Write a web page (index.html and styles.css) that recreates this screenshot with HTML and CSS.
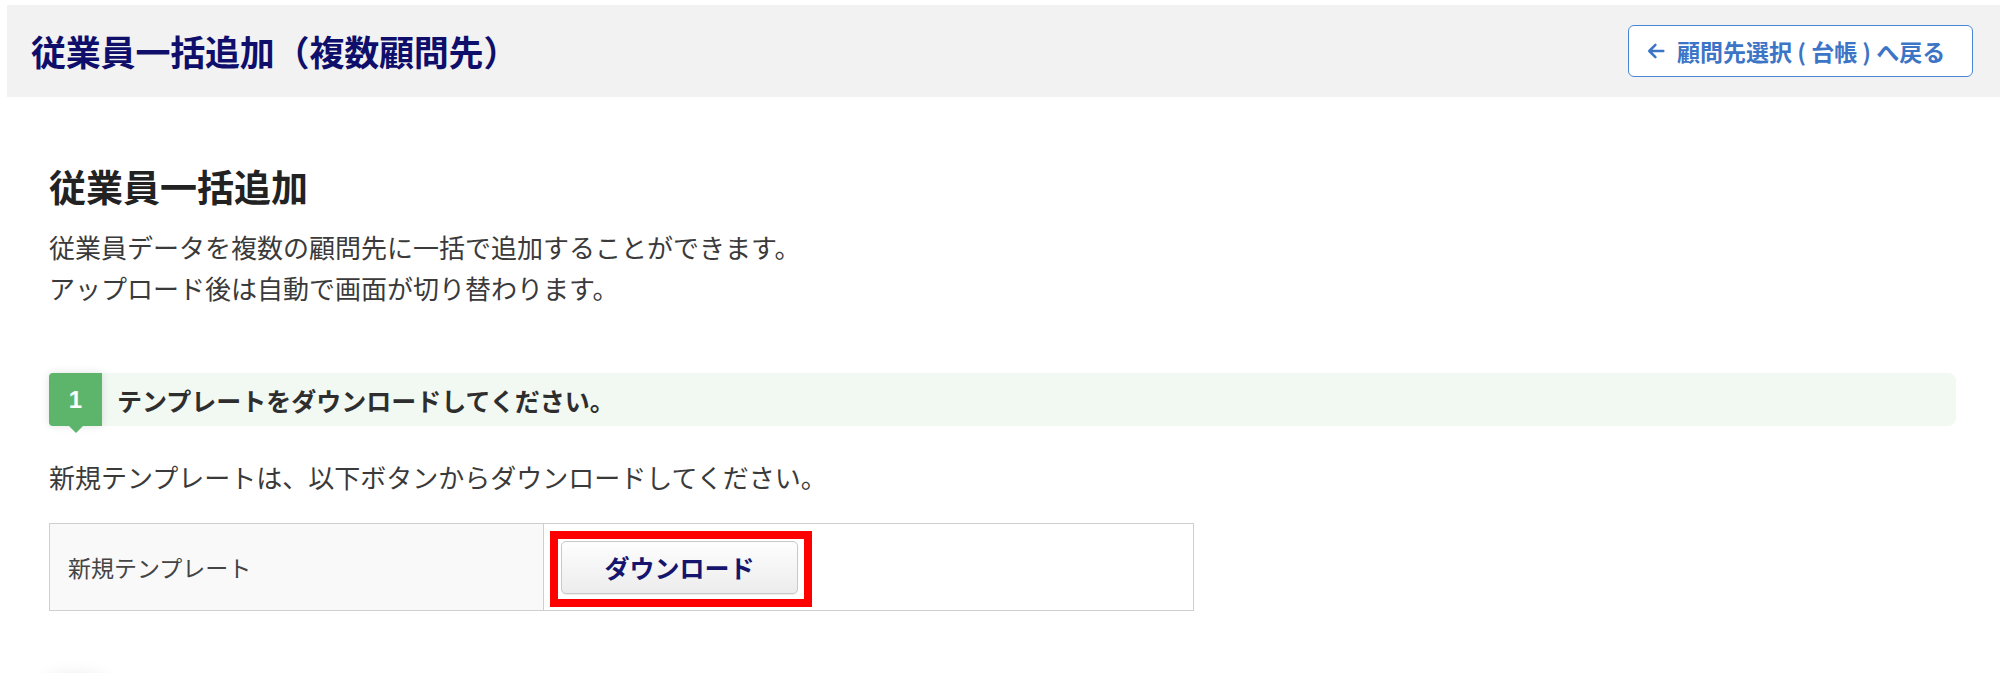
FILE: index.html
```html
<!DOCTYPE html>
<html lang="ja">
<head>
<meta charset="utf-8">
<title>従業員一括追加（複数顧問先）</title>
<link rel="stylesheet" href="styles.css">
</head>
<body>
<header class="page-header">
  <h1 class="page-title">従業員一括追加（複数顧問先）</h1>
  <a class="back-btn" href="#">
    <svg class="back-icon" viewBox="0 0 16 16" width="18" height="18" aria-hidden="true">
      <path d="M14.5 8H2M7.5 2.5L2 8L7.5 13.5" fill="none" stroke="currentColor" stroke-width="2.2" stroke-linecap="round" stroke-linejoin="round"/>
    </svg>
    <span>顧問先選択 ( 台帳 ) へ戻る</span>
  </a>
</header>

<main class="content">
  <h2 class="section-title">従業員一括追加</h2>
  <p class="lead">従業員データを複数の顧問先に一括で追加することができます。<br>アップロード後は自動で画面が切り替わります。</p>

  <div class="step">
    <div class="step-num">1</div>
    <div class="step-label">テンプレートをダウンロードしてください。</div>
  </div>
  <p class="step-text">新規テンプレートは、以下ボタンからダウンロードしてください。</p>

  <table class="dl-table">
    <tr>
      <th class="dl-head">新規テンプレート</th>
      <td class="dl-cell">
        <div class="highlight">
          <button class="dl-btn" type="button">ダウンロード</button>
        </div>
      </td>
    </tr>
  </table>

  <div class="step-next">
    <div class="step-num step-num-next"></div>
  </div>
</main>
</body>
</html>
```

FILE: styles.css
```css
* { box-sizing: border-box; }

html, body {
  margin: 0;
  padding: 0;
  background: #ffffff;
  font-family: "Noto Sans CJK JP", "Noto Sans", sans-serif;
  color: #333333;
  overflow: hidden;
}

.page-header {
  margin: 5px 0 0 7px;
  height: 92px;
  background: #f2f2f2;
  display: flex;
  align-items: center;
  justify-content: space-between;
  padding: 0 27px 0 24px;
}

.page-title {
  margin: 0;
  font-size: 35px;
  line-height: 44px;
  font-weight: 700;
  color: #0f0f6b;
  letter-spacing: -0.2px;
}

.back-btn {
  display: flex;
  align-items: center;
  gap: 12px;
  height: 52px;
  width: 345px;
  padding: 0 0 0 18px;
  background: #ffffff;
  border: 1px solid #4a86d6;
  border-radius: 6px;
  color: #3c74c6;
  font-size: 23px;
  font-weight: 700;
  text-decoration: none;
  white-space: pre;
}

.back-icon {
  flex: none;
  width: 18px;
  height: 18px;
}

.content {
  padding: 64px 44px 0 49px;
}

.section-title {
  margin: 0;
  font-size: 37px;
  line-height: 50px;
  font-weight: 700;
  color: #222222;
}

.lead {
  margin: 15px 0 0;
  font-size: 26px;
  line-height: 41px;
  color: #3a3a3a;
}

.step {
  margin-top: 65px;
  display: flex;
  align-items: center;
  height: 53px;
  background: #f2f8f2;
  border-radius: 4px 8px 8px 4px;
}

.step-num {
  position: relative;
  flex: none;
  width: 53px;
  height: 53px;
  display: flex;
  align-items: center;
  justify-content: center;
  background: #5cb56b;
  border-radius: 4px 0 0 4px;
  color: #ffffff;
  font-family: "Liberation Sans", "Noto Sans", sans-serif;
  font-size: 24px;
  font-weight: 700;
  box-shadow: 0 0 8px rgba(0, 0, 0, 0.12);
}

.step-num::after {
  content: "";
  position: absolute;
  left: 50%;
  bottom: -7px;
  margin-left: -7px;
  border-left: 7px solid transparent;
  border-right: 7px solid transparent;
  border-top: 7px solid #5cb56b;
}

.step-label {
  padding-left: 15px;
  font-size: 25px;
  font-weight: 700;
  color: #2e2e2e;
}

.step-text {
  margin: 30px 0 0;
  font-size: 26px;
  line-height: 41px;
  color: #3a3a3a;
}

.dl-table {
  margin-top: 26px;
  width: 1145px;
  border-collapse: collapse;
}

.dl-head,
.dl-cell {
  border: 1px solid #cfcfcf;
  height: 87px;
  vertical-align: middle;
}

.dl-head {
  width: 494px;
  padding: 0 0 0 18px;
  background: #f9f9f9;
  text-align: left;
  font-size: 23px;
  font-weight: 400;
  color: #444444;
}

.dl-cell {
  padding: 5px 7px 2px 6px;
  background: #ffffff;
}

.highlight {
  display: inline-block;
  border: 8px solid #ff0000;
  padding: 2px 6px 5px 3px;
  background: #ffffff;
}

.dl-btn {
  display: block;
  width: 237px;
  height: 53px;
  border: 1px solid #c9c9c9;
  border-radius: 5px;
  background: linear-gradient(#fefefe, #ececec);
  font-family: "Noto Sans CJK JP", "Noto Sans", sans-serif;
  font-size: 25px;
  font-weight: 700;
  color: #15156e;
  box-shadow: 0 1px 1px rgba(0, 0, 0, 0.08);
  cursor: pointer;
}

.step-next {
  margin-top: 72px;
  height: 53px;
}

.step-num-next {
  box-shadow: 0 0 22px rgba(0, 0, 0, 0.2);
}
```
